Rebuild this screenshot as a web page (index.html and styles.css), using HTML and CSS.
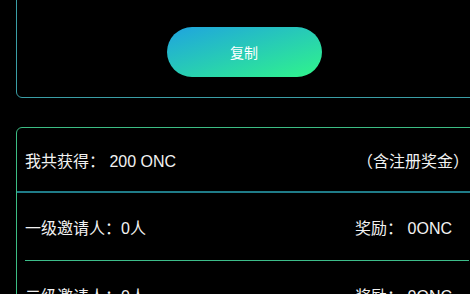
FILE: index.html
```html
<!DOCTYPE html>
<html lang="zh">
<head>
<meta charset="utf-8">
<link rel="stylesheet" href="styles.css">
</head>
<body>
<div class="page">
  <section class="card card-share">
    <button class="copy-btn">复制</button>
  </section>
  <section class="card card-stats">
    <div class="row row-total">
      <span>我共获得： 200 ONC</span>
      <span>（含注册奖金）</span>
    </div>
    <div class="row row-level">
      <span>一级邀请人：0人</span>
      <span>奖励： 0ONC</span>
    </div>
    <div class="row row-level">
      <span>二级邀请人：0人</span>
      <span>奖励： 0ONC</span>
    </div>
  </section>
</div>
</body>
</html>
```
FILE: styles.css
```css
html, body {
  margin: 0;
  padding: 0;
  background: #000;
  overflow: hidden;
  height: 294px;
}
body {
  font-family: "Liberation Sans", "Noto Sans CJK KR", sans-serif;
  color: #f2f2f2;
}
.page {
  display: flex;
  flex-direction: column;
  margin-left: 16px;
  margin-right: -6px;
}
.card {
  border-radius: 6px;
}
.card-share {
  margin-top: -10px;
  border: 1px solid #3a9ea6;
  padding: 36px 4px 20px 0;
  display: flex;
  justify-content: center;
}
.copy-btn {
  width: 155px;
  height: 50px;
  border: none;
  border-radius: 25px;
  background: linear-gradient(to bottom right, #1fa3e0, #30f58a);
  color: #fff;
  font-family: "Noto Sans CJK SC", sans-serif;
  font-size: 14px;
  cursor: pointer;
}
.card-stats {
  margin-top: 29px;
  border: 1px solid #3cbd84;
  display: flex;
  flex-direction: column;
}
.row {
  display: flex;
  justify-content: space-between;
  align-items: center;
  font-size: 16px;
}
.row-total {
  height: 63px;
  padding: 0 6px 0 8px;
  border-bottom: 2px solid #1f7c88;
}
.row-level {
  height: 67px;
  margin: 0 6px 0 8px;
  padding-right: 17px;
  border-bottom: 1px solid #3dbd8a;
}
```
